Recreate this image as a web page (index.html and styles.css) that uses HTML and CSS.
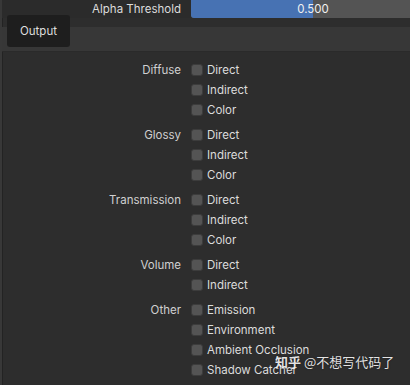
FILE: index.html
```html
<!DOCTYPE html>
<html>
<head>
<meta charset="utf-8">
<link rel="stylesheet" href="styles.css">
</head>
<body>
<div class="panel">
  <div class="slider-row">
    <div class="label">Alpha Threshold</div>
    <div class="slider"><div class="fill"></div><span class="value">0.500</span></div>
  </div>
  <div class="band"><div class="tab">Output</div></div>
  <div class="content">
    <div class="group">
      <div class="glabel">Diffuse</div>
      <div class="opts">
        <div class="opt"><span class="cb"></span>Direct</div>
        <div class="opt"><span class="cb"></span>Indirect</div>
        <div class="opt"><span class="cb"></span>Color</div>
      </div>
    </div>
    <div class="group">
      <div class="glabel">Glossy</div>
      <div class="opts">
        <div class="opt"><span class="cb"></span>Direct</div>
        <div class="opt"><span class="cb"></span>Indirect</div>
        <div class="opt"><span class="cb"></span>Color</div>
      </div>
    </div>
    <div class="group">
      <div class="glabel">Transmission</div>
      <div class="opts">
        <div class="opt"><span class="cb"></span>Direct</div>
        <div class="opt"><span class="cb"></span>Indirect</div>
        <div class="opt"><span class="cb"></span>Color</div>
      </div>
    </div>
    <div class="group">
      <div class="glabel">Volume</div>
      <div class="opts">
        <div class="opt"><span class="cb"></span>Direct</div>
        <div class="opt"><span class="cb"></span>Indirect</div>
      </div>
    </div>
    <div class="group">
      <div class="glabel">Other</div>
      <div class="opts">
        <div class="opt"><span class="cb"></span>Emission</div>
        <div class="opt"><span class="cb"></span>Environment</div>
        <div class="opt"><span class="cb"></span>Ambient Occlusion</div>
        <div class="opt"><span class="cb"></span>Shadow Catcher</div>
      </div>
    </div>
  </div>
  <div class="watermark"><b>知乎</b> @不想写代码了</div>
</div>
</body>
</html>
```

FILE: styles.css
```css
html, body {
  margin: 0;
  padding: 0;
  background: #2e2e2e;
}
body {
  width: 410px;
  height: 385px;
  overflow: hidden;
  font-family: Inter, "Noto Sans", sans-serif;
  font-size: 11.5px;
  color: #d8d8d8;
}
.panel {
  position: relative;
  width: 410px;
  height: 385px;
  box-sizing: border-box;
  border-left: 2px solid #383838;
  box-shadow: inset 1px 0 0 #232323;
  background: #2d2d2d;
  overflow: hidden;
}
.slider-row {
  display: flex;
  align-items: center;
  height: 18px;
  background: #2b2b2b;
  overflow: hidden;
}
.label {
  flex: none;
  width: 179px;
  padding-right: 10px;
  text-align: right;
  color: #dcdcdc;
}
.slider {
  position: relative;
  flex: none;
  width: 244px;
  height: 20px;
  margin-top: -3px;
  border-radius: 3px;
  background: #545454;
  overflow: hidden;
  display: flex;
  align-items: center;
  justify-content: center;
}
.fill {
  position: absolute;
  left: 0;
  top: 0;
  bottom: 0;
  width: 50%;
  background: #4772b3;
}
.value {
  position: relative;
  color: #f0f0f0;
  padding-top: 3px;
}
.band {
  margin-top: 9px;
  height: 24px;
  background: #373737;
  border-bottom: 1px solid #2a2a2a;
  display: flex;
  padding-left: 5px;
}
.tab {
  margin-top: -12px;
  width: 63px;
  height: 32px;
  box-sizing: border-box;
  background: #1e1e1e;
  border-radius: 3px;
  display: flex;
  align-items: center;
  justify-content: center;
  color: #dedede;
}
.content {
  padding-top: 8px;
  display: flex;
  flex-direction: column;
  gap: 5px;
}
.group {
  display: flex;
}
.glabel {
  flex: none;
  width: 179px;
  padding-right: 10px;
  height: 20px;
  line-height: 20px;
  text-align: right;
  color: #d0d0d0;
}
.opts {
  display: flex;
  flex-direction: column;
}
.opt {
  height: 20px;
  display: flex;
  align-items: center;
  gap: 4px;
  color: #dcdcdc;
}
.cb {
  width: 12px;
  height: 12px;
  box-sizing: border-box;
  border-radius: 3px;
  background: #545454;
  border: 1px solid #3c3c3c;
  margin-top: -1px;
}
.watermark {
  position: absolute;
  left: 273px;
  top: 352px;
  font-family: "Noto Sans CJK SC", sans-serif;
  font-size: 13px;
  color: rgba(255, 255, 255, 0.88);
  text-shadow: 0 0 2px rgba(0, 0, 0, 0.4);
  white-space: nowrap;
}
.watermark b {
  font-weight: 700;
}
```
